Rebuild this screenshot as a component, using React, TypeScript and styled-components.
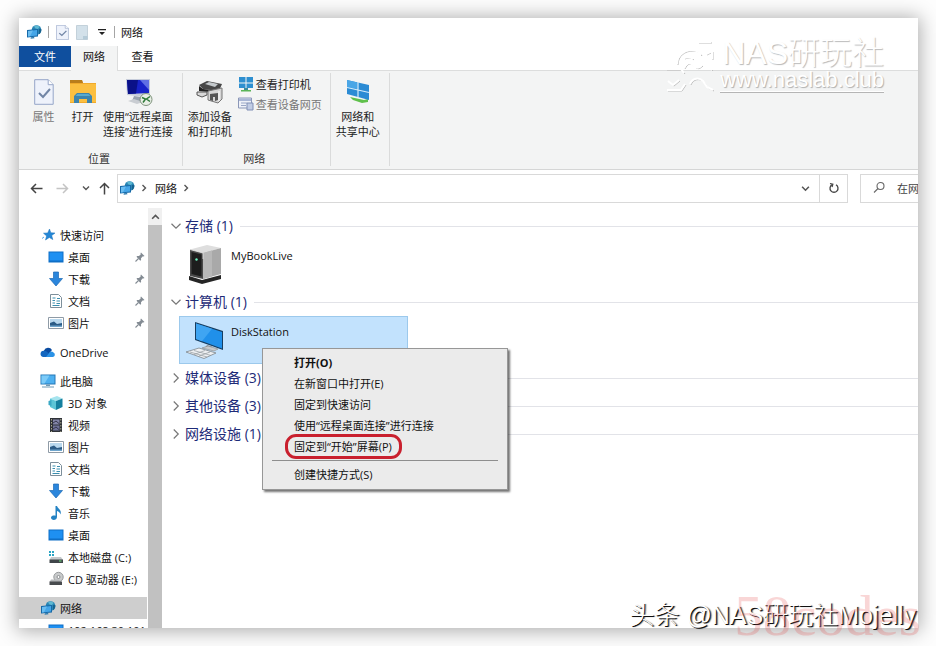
import React from "react";
import styled, { createGlobalStyle, css } from "styled-components";

const fontStack = `"Open Sans", "Noto Sans", "Noto Sans CJK SC", sans-serif`;

const GlobalStyle = createGlobalStyle`
  * { box-sizing: border-box; }
  body { margin: 0; background: #fff; }
  button, input, a { font: inherit; color: inherit; }
  button { border: 0; padding: 0; margin: 0; background: none; }
  ul { list-style: none; margin: 0; padding: 0; }
  svg { display: block; flex: none; }
`;

const Page = styled.main`
  height: 100vh;
  padding: 18px 18px 18px 19px;
  overflow: hidden;
  font: 11px/15px ${fontStack};
  color: #111;
  background: #fdfdfd;
`;

const Window = styled.section`
  position: relative;
  display: flex;
  flex-direction: column;
  height: 100%;
  background: #fff;
  box-shadow: 0 1px 18px 2px rgba(0, 0, 0, 0.32);
`;

const TitleBar = styled.header`
  display: flex;
  align-items: center;
  height: 28px;
  padding-left: 7px;
  gap: 6px;
`;

const Divider = styled.span`
  width: 1px;
  height: 12px;
  background: #a5a5a5;
`;

const IconButton = styled.button`
  display: flex;
  align-items: center;
  justify-content: center;
  min-width: 13px;
`;

const QuickButton = styled(IconButton)`
  min-width: 14px;
`;

const Title = styled.h1`
  margin: 0;
  font-size: 11px;
  font-weight: 400;
`;

const Tabs = styled.nav`
  display: flex;
  height: 25px;
  border-bottom: 1px solid #dcdddd;
`;

const Tab = styled.button<{ $kind: "file" | "active" | "plain" }>`
  width: 49px;
  height: 21px;
  ${(p) =>
    p.$kind === "file" &&
    css`
      width: 52px;
      color: #fff;
      background: #0f4f9e;
    `}
  ${(p) =>
    p.$kind === "active" &&
    css`
      height: 25px;
      width: 47px;
      padding-bottom: 4px;
      background: #f3f4f4;
      border-right: 1px solid #dcdddd;
    `}
`;

const Ribbon = styled.div`
  display: flex;
  height: 99px;
  padding: 2px 0 3px;
  background: #f3f4f4;
  border-bottom: 1px solid #d5d6d6;
`;

const RibbonGroup = styled.section`
  display: flex;
  flex-direction: column;
  justify-content: space-between;
  padding: 4px 8px 0 4px;
  border-right: 1px solid #dadbdb;
  &:first-child { padding-left: 5px; }
`;

const RibbonItems = styled.div`
  display: flex;
  align-items: flex-start;
`;

const GroupLabel = styled.h2`
  height: 15px;
  margin: 0;
  font-size: 11px;
  font-weight: 400;
  text-align: center;
  color: #333;
`;

const LargeButton = styled.button<{ $muted?: boolean }>`
  display: flex;
  flex-direction: column;
  align-items: center;
  min-width: 39px;
  padding: 0 1px;
  gap: 2px;
  white-space: nowrap;
  color: ${(p) => (p.$muted ? "#777" : "#222")};
`;

const SmallColumn = styled.div`
  display: flex;
  flex-direction: column;
  padding-left: 5px;
`;

const SmallButton = styled.button<{ $muted?: boolean }>`
  display: flex;
  align-items: center;
  gap: 2px;
  height: 20px;
  margin-top: -3px;
  margin-bottom: 3px;
  white-space: nowrap;
  color: ${(p) => (p.$muted ? "#777" : "#222")};
`;

const AddressRow = styled.div`
  display: flex;
  align-items: center;
  height: 36px;
  margin-bottom: 2px;
  padding-left: 11px;
`;

const NavButtons = styled.div`
  display: flex;
  align-items: center;
  gap: 13px;
  margin-right: 6px;
`;

const HistoryGroup = styled.div`
  display: flex;
  align-items: center;
  gap: 6px;
  margin-left: -3px;
`;

const AddressField = styled.div`
  display: flex;
  flex: 1;
  align-items: center;
  height: 29px;
  border: 1px solid #d9d9d9;
`;

const Crumbs = styled.div`
  display: flex;
  flex: 1;
  align-items: center;
  gap: 5px;
  padding-left: 1px;
`;

const CrumbLink = styled.a`
  padding-left: 2px;
  text-decoration: none;
`;

const FieldButton = styled.button<{ $edge?: boolean }>`
  display: flex;
  align-items: center;
  justify-content: center;
  width: 28px;
  height: 27px;
  border-left: ${(p) => (p.$edge ? "1px solid #d9d9d9" : "0")};
`;

const SearchField = styled.label`
  display: flex;
  flex: 0 0 58px;
  align-items: center;
  gap: 11px;
  height: 29px;
  margin-left: 12px;
  padding-left: 11px;
  overflow: hidden;
  border: 1px solid #d9d9d9;
  border-right: 0;
`;

const SearchInput = styled.input`
  flex: none;
  width: 100px;
  padding: 0;
  border: 0;
  outline: 0;
  background: transparent;
  &::placeholder { color: #444; opacity: 1; }
`;

const Body = styled.div`
  display: flex;
  flex: 1;
  min-height: 0;
`;

const Sidebar = styled.nav`
  display: flex;
  flex: 0 0 128px;
  flex-direction: column;
  gap: 7px;
  padding-top: 16px;
  overflow: hidden;
`;

const SideRow = styled.a<{ $level: number; $active?: boolean }>`
  display: flex;
  align-items: center;
  gap: 4px;
  height: 22px;
  padding: 0 2px 0 ${(p) => (p.$level ? 29 : 21)}px;
  text-decoration: none;
  white-space: nowrap;
  background: ${(p) => (p.$active ? "#cecece" : "transparent")};
`;

const SideLabel = styled.span`
  flex: 1;
`;

const ScrollTrack = styled.div`
  display: flex;
  flex: 0 0 14px;
  flex-direction: column;
  margin-left: 1px;
  background: #f0f0f0;
`;

const ScrollUp = styled.button`
  display: flex;
  align-items: center;
  justify-content: center;
  height: 17px;
`;

const ScrollThumb = styled.div`
  flex: 1;
  background: #c1c1c1;
`;

const Content = styled.div`
  flex: 1;
  padding: 4px 0 0 8px;
`;

const SectionHeading = styled.button`
  display: flex;
  align-items: center;
  gap: 3px;
  width: 100%;
  height: 28px;
  font-size: 14px;
  line-height: 20px;
  color: #1e2b78;
  white-space: nowrap;
  &::after {
    content: "";
    flex: 1;
    height: 1px;
    margin-left: 4px;
    background: #e2e3e8;
  }
`;

const DeviceTile = styled.div<{ $selected?: boolean }>`
  position: relative;
  display: flex;
  gap: 5px;
  width: 229px;
  height: 48px;
  margin-left: 9px;
  padding: 3px 6px;
  border: 1px solid ${(p) => (p.$selected ? "#9cc9ec" : "transparent")};
  background: ${(p) => (p.$selected ? "#c2e2fd" : "transparent")};
`;

const DeviceName = styled.span`
  padding-top: 4px;
`;

const Menu = styled.div`
  position: absolute;
  z-index: 2;
  top: 31px;
  left: 82px;
  width: 246px;
  padding: 3px 9px 4px;
  background: #ebebeb;
  border: 1px solid #979797;
  box-shadow: 2px 2px 2px rgba(0, 0, 0, 0.55);
`;

const MenuItem = styled.button<{ $strong?: boolean }>`
  position: relative;
  display: block;
  width: 100%;
  height: 21px;
  padding-left: 22px;
  text-align: left;
  white-space: nowrap;
  font-weight: ${(p) => (p.$strong ? 700 : 400)};
`;

const Highlight = styled.span`
  position: absolute;
  top: -2px;
  left: 13px;
  width: 117px;
  height: 25px;
  border: 3px solid #c9202e;
  border-radius: 11px;
`;

const MenuRule = styled.hr`
  height: 1px;
  margin: 3px 0;
  border: 0;
  background: #8e8e8e;
`;

const BrandMark = styled.div`
  position: absolute;
  top: 20px;
  right: 34px;
  display: flex;
  align-items: flex-start;
  color: #fff;
  font-family: "Liberation Sans", "Noto Sans CJK SC", sans-serif;
  text-shadow: 1px 1px 1px rgba(0, 0, 0, 0.28);
`;

const BrandText = styled.div`
  display: flex;
  flex-direction: column;
  align-items: flex-end;
`;

const BrandName = styled.div`
  height: 30px;
  font-size: 32px;
  line-height: 30px;
  font-weight: 300;
`;

const BrandUrl = styled.div`
  height: 24px;
  font-size: 22px;
  line-height: 23px;
  border-bottom: 1px solid #fff;
  box-shadow: 0 1px 0 #b5b5b5;
`;

const AuthorMark = styled.div`
  position: absolute;
  right: 2px;
  bottom: -2px;
  font: 300 25px/30px "Liberation Sans", "Noto Sans CJK SC", sans-serif;
  color: #fff;
  white-space: nowrap;
  text-shadow: 1px 1px 0 #111, 2px 1px 1px rgba(0, 0, 0, 0.5);
`;

const SiteMark = styled.div`
  position: absolute;
  right: -3px;
  bottom: -18px;
  font: 57px/60px "Liberation Serif", serif;
  color: rgba(226, 70, 70, 0.22);
`;

const Chevron = ({ dir, color = "#555", size = 8 }: { dir: "up" | "down" | "right"; color?: string; size?: number }) => {
  const d = { up: "M1 6l3-3 3 3", down: "M1 2.5l3 3 3-3", right: "M2.5 1l3 3-3 3" }[dir];
  return (
    <svg width={size} height={size} viewBox="0 0 8 8" fill="none" stroke={color} strokeWidth={size > 9 ? 0.8 : 1.4}>
      <path d={d} />
    </svg>
  );
};

const NetworkIcon = () => (
  <svg width="16" height="16" viewBox="0 0 16 16">
    <circle cx="10.5" cy="6" r="4.8" fill="#2a86b4" />
    <path d="M8 2.500c2-1.500 4-1.300 5.500.5L12 5 9.500 4.500z" fill="#5fb9d2" />
    <path d="M13 5l2.300 0c.3 2-.3 4-2.300 5.200z" fill="#17638f" />
    <path d="M1 6l11-1v7.500L1 13.500z" fill="#1769a8" />
    <path d="M2 7l9-.9v5.400l-9 .9z" fill="#45a6e8" />
    <path d="M2 7l5-.5-3 5.700-2 .2z" fill="#6bbdf0" />
    <path d="M5 13.300l3-.3.5 1.200-4 .5z" fill="#2a79ac" />
  </svg>
);

const DocCheckIcon = ({ w, h }: { w: number; h: number }) => (
  <svg width={w} height={h} viewBox="0 0 20 26" preserveAspectRatio="none">
    <path d="M.7.7h13.500l5 5v19.600H.7z" fill="#eef2fb" stroke="#95a5c8" />
    <path d="M14.200.7v5h5" fill="#fff" stroke="#95a5c8" />
    <path d="M5 14l4 4 7-8" fill="none" stroke="#7286a6" strokeWidth="2" />
  </svg>
);

const FadedDocIcon = () => (
  <svg width="12" height="15" viewBox="0 0 12 15">
    <path d="M.5.500h11v14H.5z" fill="#d3e1ea" stroke="#c3d1da" />
    <path d="M7 11h4.500v3.500H7z" fill="#b5cbd8" />
  </svg>
);

const CustomizeIcon = () => (
  <svg width="8" height="8" viewBox="0 0 8 8">
    <path d="M0 1h8v1.200H0zM1 4h6L4 7z" fill="#222" />
  </svg>
);

const OpenFolderIcon = () => (
  <svg width="28" height="30" viewBox="0 0 28 30">
    <path d="M1 3h12l1 3h13v20H1z" fill="#f0aa2c" />
    <path d="M1 3h12l1 3H1z" fill="#b97d1b" />
    <path d="M1 7h26v18H1z" fill="#fbbf40" />
    <path d="M5 26v-7l3-3h12l3 3v7h-5v-4h-8v4z" fill="#3d84ad" />
    <path d="M6.500 19l2-2h11l2 2z" fill="#5aaacd" />
  </svg>
);

const RemoteIcon = () => (
  <svg width="30" height="30" viewBox="0 0 30 30">
    <path d="M3 2l24 0v15l-3 3L4 18z" fill="#c6ccda" />
    <path d="M4 3l22 0v13L5 17z" fill="#1823c8" />
    <path d="M4 3l11 0-2 13.500L5 17z" fill="#0a1188" />
    <path d="M17 3l9 0v10z" fill="#5f6fe4" />
    <path d="M11 19l7 1 0 4H9z" fill="#9aa3b0" />
    <path d="M5 24l6-2 9 3-6 2z" fill="#c9cdd2" />
    <circle cx="23" cy="22.500" r="6" fill="#e9efe6" stroke="#7f937d" />
    <path d="M19 20.500l3.500 1.500-2.500 3.500M27 19.500l-3.500 2.500 3.500 2.500" fill="none" stroke="#2f7a39" strokeWidth="1.500" />
  </svg>
);

const PrinterIcon = () => (
  <svg width="28" height="30" viewBox="0 0 28 30">
    <path d="M3 8l8-4 15 3-3 7-16-2z" fill="#474747" />
    <path d="M9 7l4-2 9 2-3 3z" fill="#c4c9cc" />
    <path d="M3 9l4 3 16 2v2L3 14z" fill="#222" />
    <path d="M1 15h10v3l-5 2-5-2z" fill="#d8d8d8" stroke="#555" />
    <path d="M12 14l14-3v11l-4 4-10-3z" fill="#d6d6d6" stroke="#777" />
    <path d="M14 17l8-1v7l-3 1v-4h-2v4l-3-1z" fill="#555" />
    <path d="M23 14v10" stroke="#fff" />
  </svg>
);

const PanesIcon = () => (
  <svg width="16" height="16" viewBox="0 0 16 16">
    <path d="M1 1h6.500v5.500H1zM8.500 1H15v5.500H8.500zM1 7.500h6.500V12H1zM8.500 7.500H15V12H8.500z" fill="#2e8fd0" />
    <path d="M6 12h4v2H6z" fill="#3d8c9a" />
    <path d="M3 14h10v1.500H3z" fill="#59b457" />
  </svg>
);

const WebPageIcon = () => (
  <svg width="16" height="14" viewBox="0 0 16 14">
    <path d="M.5 1h13v10H.5z" fill="#eef1f8" stroke="#8b97b8" />
    <path d="M1 1.500h12V4H1z" fill="#a9b6d5" />
    <path d="M3 6h6M3 8.500h5" stroke="#9aa7c6" />
    <path d="M9 6h6v7H9z" fill="#c1cce4" stroke="#8190b6" />
  </svg>
);

const SharingIcon = () => (
  <svg width="28" height="30" viewBox="0 0 28 30">
    <path d="M6 20l14 3 4-1v3l-6 1-9-3z" fill="#5fc04b" />
    <path d="M3 3l22 5v15L3 17z" fill="#2b8bd4" />
    <path d="M3 3l10.500 2.400v6.600L3 10z" fill="#4aa6e6" />
    <path d="M14 5v15M3 10.500l22 5" stroke="#d4ecfb" strokeWidth="1.200" />
  </svg>
);

const ArrowIcon = ({ dir, color = "#444" }: { dir: "left" | "right" | "up"; color?: string }) => {
  const d = {
    left: "M12.500 6.500H1.500M6 2L1.500 6.500 6 11",
    right: "M.5 6.500h11M7 2l4.500 4.500L7 11",
    up: "M6.500 12.500v-11M2 6l4.500-4.500L11 6",
  }[dir];
  return (
    <svg width="13" height="13" viewBox="0 0 13 13" fill="none" stroke={color} strokeWidth="1.500">
      <path d={d} />
    </svg>
  );
};

const RefreshIcon = () => (
  <svg width="12" height="12" viewBox="0 0 12 12" fill="none" stroke="#444" strokeWidth="1.300">
    <path d="M8 2.800A4 4 0 1 1 4 2.800" />
    <path d="M2 1.500l2.800.8L4 5" />
  </svg>
);

const SearchIcon = () => (
  <svg width="14" height="14" viewBox="0 0 14 14" fill="none" stroke="#666" strokeWidth="1.100">
    <circle cx="8.500" cy="5" r="3.500" />
    <path d="M6 7.500L2 11.500" />
  </svg>
);

const PinIcon = () => (
  <svg width="10" height="10" viewBox="0 0 10 10">
    <path d="M6 .5L9.500 4l-1 .5-.6-.2L6 6.200l.1 1.800-.8.700L1.500 4.700l.7-.7 1.800.1L5.800 2.200 5.500 1.200z" fill="#838b93" />
    <path d="M3.500 6.500L.5 9.500" stroke="#838b93" strokeWidth="1.100" />
  </svg>
);

const StarIcon = () => (
  <svg width="16" height="16" viewBox="0 0 16 16">
    <path d="M9.500 2l1.300 3.800 4.200.2-3.300 2.600 1.100 4L9.300 10.500 5.500 13l1.100-4.100L3.500 6.200l4.200-.3z" fill="#2487d6" stroke="#1870b8" strokeWidth=".5" />
    <path d="M4 10L2 11.500" stroke="#5aa9e4" />
  </svg>
);

const DesktopIcon = () => (
  <svg width="16" height="16" viewBox="0 0 16 16">
    <path d="M.5 2.500h15v11H.5z" fill="#0f6fc6" />
    <path d="M1.500 3.500h13v8h-13z" fill="#1e90f2" />
  </svg>
);

const DownloadIcon = () => (
  <svg width="16" height="16" viewBox="0 0 16 16">
    <path d="M5.500 1h5v6.500h4L8 15 1.500 7.500h4z" fill="#2b86dc" stroke="#1a68b5" strokeWidth=".7" />
  </svg>
);

const DocumentIcon = () => (
  <svg width="16" height="16" viewBox="0 0 16 16">
    <path d="M2.500 1.500h8l3 3v10h-11z" fill="#fff" stroke="#7d8f9b" />
    <path d="M4.500 5h3M9 5.500h3M4.500 7.500H7M8.500 8H12M4.500 10H7M8.500 10.500H12M4.500 12.500h7" stroke="#3b8fb0" strokeWidth="1.200" />
  </svg>
);

const PictureIcon = () => (
  <svg width="16" height="16" viewBox="0 0 16 16">
    <path d="M.5 2.500h15v11H.5z" fill="#fff" stroke="#8f9ba6" />
    <path d="M2 4h12v8H2z" fill="#b9d8ee" />
    <path d="M2 8l4-1.500L9 9l5-1v4H2z" fill="#2b5b86" />
    <path d="M2 10.500h12V12H2z" fill="#6fa5cc" />
  </svg>
);

const CloudIcon = () => (
  <svg width="16" height="16" viewBox="0 0 16 16">
    <path d="M4 6.500A4.500 4.500 0 0 1 12 6l-5 6H3z" fill="#0a4ba0" />
    <path d="M3.500 13a3 3 0 0 1 .3-6.200C6 6.500 7 8 9 9.500L12.500 13z" fill="#1366bf" />
    <path d="M6 13l4-5a3 3 0 0 1 3.500.5A2.400 2.400 0 0 1 13 13z" fill="#2a92e6" />
  </svg>
);

const ComputerIcon = () => (
  <svg width="16" height="16" viewBox="0 0 16 16">
    <path d="M.5 1.500h15v10H.5z" fill="#2577b5" />
    <path d="M1.500 2.500h13v8h-13z" fill="#4eb0f0" />
    <path d="M1.500 2.500h8l-5 8h-3z" fill="#7ccbf8" />
    <path d="M6 11.500h4v1.500H6zM2 13.500h12v1H2z" fill="#6f9ab5" />
  </svg>
);

const CubeIcon = () => (
  <svg width="16" height="16" viewBox="0 0 16 16">
    <path d="M2 3.500L9 1l5.500 2.500L8 6z" fill="#a6e4ee" />
    <path d="M2 3.500L8 6v9l-6-3z" fill="#5cc5d6" />
    <path d="M8 6l6.500-2.500V12L8 15z" fill="#15809f" />
    <path d="M.5 6l3-1v6l-3-1z" fill="#3aa9c5" />
  </svg>
);

const VideoIcon = () => (
  <svg width="16" height="16" viewBox="0 0 16 16">
    <path d="M2 1h12v14H2z" fill="#2f3238" />
    <path d="M5 2.500h6.500v5H5z" fill="#8385a8" />
    <path d="M5 8.500h6.500v5H5z" fill="#6f7299" />
    <path d="M3.500 2v13M12.800 2v13" stroke="#a9a88c" strokeWidth="1" strokeDasharray="1.500 1.500" />
    <path d="M5 6l3-2 3.500 3M5 12l3-2 3.500 3" stroke="#34364c" fill="none" />
  </svg>
);

const MusicIcon = () => (
  <svg width="16" height="16" viewBox="0 0 16 16">
    <path d="M7.500 1H9c.5 2.500 5 3.500 3.500 8.500-.5-2-1.700-3-3.500-3.500V12c0 4-6.500 3.500-6 .5.400-2 3-2.400 4.500-1.700z" fill="#2583c4" />
  </svg>
);

const DiskIcon = () => (
  <svg width="16" height="16" viewBox="0 0 16 16">
    <path d="M1 2h2v2H1zM4 2h2v2H4zM1 5h2v2H1zM4 5h2v2H4z" fill="#29a5c4" />
    <path d="M3 8h10l2 3H1.500z" fill="#c3c7ca" />
    <path d="M1.500 10.500H15V14H1.500z" fill="#3f4549" />
    <path d="M11 12h2.500" stroke="#6de07d" />
  </svg>
);

const CdIcon = () => (
  <svg width="16" height="16" viewBox="0 0 16 16">
    <circle cx="10.500" cy="6" r="4.700" fill="#c9cbcc" stroke="#989b9d" />
    <circle cx="10.500" cy="6" r="1.500" fill="#fff" stroke="#8b8e90" />
    <path d="M3 8.500h8l2 2.500H1.500z" fill="#b5b8ba" />
    <path d="M1.500 10.500h12.500V14H1.500z" fill="#484b4e" />
  </svg>
);

const NasIcon = () => (
  <svg width="40" height="40" viewBox="0 0 40 40">
    <path d="M3 32l13 4 19-5v4l-19 5-13-4z" fill="#252525" />
    <path d="M4 5.500L21 1l14 3-18 5z" fill="#dedede" />
    <path d="M4 5.500L17 9v26L4 32z" fill="#4a4a4a" />
    <path d="M5.500 8L15.500 10.500v22L5.500 30z" fill="#1d1d1d" />
    <path d="M17 9l18-5v26l-18 5z" fill="#a9a9a9" />
    <path d="M17 9l9-2.500v26L17 35z" fill="#b8b8b8" />
    <circle cx="10.500" cy="15.500" r="1.200" fill="#6df0bd" />
    <path d="M4 5.500L17 9v6" fill="none" stroke="#e6e6e6" strokeWidth=".8" />
  </svg>
);

const WorkstationIcon = () => (
  <svg width="40" height="40" viewBox="0 0 40 40">
    <path d="M9 2l28 9v19L9 20z" fill="#173e61" />
    <path d="M10 3.500L36 12v16.500L10 19z" fill="#2090ea" />
    <path d="M10 3.500L26 8.700 16 21.200 10 19z" fill="#3fa5f2" />
    <path d="M21 25l5 1.500-1 3-6-2z" fill="#8c9499" />
    <path d="M16 28l12 3 4-2-10-3z" fill="#c7cbce" stroke="#888" strokeWidth=".6" />
    <path d="M0 32l13-4 17 5-12 5.500z" fill="#eef0f2" stroke="#7f868b" strokeWidth=".8" />
    <path d="M4 32l17 5M8 30.500l17 5M8 34.500l11-4M13 36l11-4" stroke="#92999e" strokeWidth=".7" />
  </svg>
);

const gearPaths = [
  "M13 26c0-9 7-14 15-14 5 0 7 2 9 5",
  "M20 20c4-2 7-1 9 1",
  "M20 30c3-6 6-6 9-3s5 4 9 0",
  "M34 4h13M42 16l6-3v8M42 26l6 6",
  "M2 31h15l3 4M4 43l5 4 6-5M3 52h14l4-6",
  "M26 46c2-6 9-7 13-3l4 6 6 3",
];

const GearMark = () => (
  <svg width="56" height="54" viewBox="0 0 56 54" fill="none">
    {gearPaths.map((d) => (
      <g key={d}>
        <path d={d} stroke="#bdbdbd" transform="translate(1 1)" />
        <path d={d} stroke="#fff" strokeWidth="2" />
      </g>
    ))}
  </svg>
);

type SideEntry = { label: string; icon: React.ReactNode; level?: number; pinned?: boolean; active?: boolean };

const sideGroups: SideEntry[][] = [
  [
    { label: "快速访问", icon: <StarIcon /> },
    { label: "桌面", icon: <DesktopIcon />, level: 1, pinned: true },
    { label: "下载", icon: <DownloadIcon />, level: 1, pinned: true },
    { label: "文档", icon: <DocumentIcon />, level: 1, pinned: true },
    { label: "图片", icon: <PictureIcon />, level: 1, pinned: true },
  ],
  [{ label: "OneDrive", icon: <CloudIcon /> }],
  [
    { label: "此电脑", icon: <ComputerIcon /> },
    { label: "3D 对象", icon: <CubeIcon />, level: 1 },
    { label: "视频", icon: <VideoIcon />, level: 1 },
    { label: "图片", icon: <PictureIcon />, level: 1 },
    { label: "文档", icon: <DocumentIcon />, level: 1 },
    { label: "下载", icon: <DownloadIcon />, level: 1 },
    { label: "音乐", icon: <MusicIcon />, level: 1 },
    { label: "桌面", icon: <DesktopIcon />, level: 1 },
    { label: "本地磁盘 (C:)", icon: <DiskIcon />, level: 1 },
    { label: "CD 驱动器 (E:)", icon: <CdIcon />, level: 1 },
  ],
  [
    { label: "网络", icon: <NetworkIcon />, active: true },
    { label: "192.168.30.101", icon: <DesktopIcon />, level: 1 },
  ],
];

const Heading = ({ label, open }: { label: string; open?: boolean }) => (
  <SectionHeading aria-expanded={!!open}>
    <Chevron dir={open ? "down" : "right"} color="#777" size={12} />
    {label}
  </SectionHeading>
);

export default function App() {
  return (
    <Page>
      <GlobalStyle />
      <Window>
        <TitleBar>
          <NetworkIcon />
          <Divider />
          <QuickButton aria-label="属性"><DocCheckIcon w={13} h={15} /></QuickButton>
          <QuickButton aria-label="新建"><FadedDocIcon /></QuickButton>
          <IconButton aria-label="自定义"><CustomizeIcon /></IconButton>
          <Divider />
          <Title>网络</Title>
        </TitleBar>
        <Tabs>
          <Tab $kind="file">文件</Tab>
          <Tab $kind="active">网络</Tab>
          <Tab $kind="plain">查看</Tab>
        </Tabs>
        <Ribbon>
          <RibbonGroup>
            <RibbonItems>
              <LargeButton $muted><svg width="20" height="30" viewBox="0 0 20 30"><g transform="translate(0 2)"><DocCheckIcon w={20} h={26} /></g></svg>属性</LargeButton>
              <LargeButton><OpenFolderIcon />打开</LargeButton>
              <LargeButton><RemoteIcon /><span>使用“远程桌面<br />连接”进行连接</span></LargeButton>
            </RibbonItems>
            <GroupLabel>位置</GroupLabel>
          </RibbonGroup>
          <RibbonGroup>
            <RibbonItems>
              <LargeButton><PrinterIcon /><span>添加设备<br />和打印机</span></LargeButton>
              <SmallColumn>
                <SmallButton><PanesIcon />查看打印机</SmallButton>
                <SmallButton $muted><WebPageIcon />查看设备网页</SmallButton>
              </SmallColumn>
            </RibbonItems>
            <GroupLabel>网络</GroupLabel>
          </RibbonGroup>
          <RibbonGroup>
            <RibbonItems>
              <LargeButton><SharingIcon /><span>网络和<br />共享中心</span></LargeButton>
            </RibbonItems>
          </RibbonGroup>
        </Ribbon>
        <AddressRow>
          <NavButtons>
            <IconButton aria-label="后退"><ArrowIcon dir="left" /></IconButton>
            <IconButton aria-label="前进"><ArrowIcon dir="right" color="#c4c4c4" /></IconButton>
            <HistoryGroup>
              <IconButton aria-label="最近"><Chevron dir="down" /></IconButton>
              <IconButton aria-label="上移"><ArrowIcon dir="up" /></IconButton>
            </HistoryGroup>
          </NavButtons>
          <AddressField>
            <Crumbs>
              <NetworkIcon />
              <Chevron dir="right" />
              <CrumbLink href="#network">网络</CrumbLink>
              <Chevron dir="right" />
            </Crumbs>
            <FieldButton aria-label="展开"><Chevron dir="down" size={9} /></FieldButton>
            <FieldButton $edge aria-label="刷新"><RefreshIcon /></FieldButton>
          </AddressField>
          <SearchField>
            <SearchIcon />
            <SearchInput aria-label="搜索" placeholder="在网络中搜索" />
          </SearchField>
        </AddressRow>
        <Body>
          <Sidebar>
            {sideGroups.map((group, g) => (
              <ul key={g}>
                {group.map((item) => (
                  <li key={item.label}>
                    <SideRow href="#" $level={item.level ?? 0} $active={item.active}>
                      {item.icon}
                      <SideLabel>{item.label}</SideLabel>
                      {item.pinned && <PinIcon />}
                    </SideRow>
                  </li>
                ))}
              </ul>
            ))}
          </Sidebar>
          <ScrollTrack>
            <ScrollUp aria-label="向上滚动"><Chevron dir="up" size={9} /></ScrollUp>
            <ScrollThumb />
          </ScrollTrack>
          <Content>
            <Heading open label="存储 (1)" />
            <DeviceTile>
              <NasIcon />
              <DeviceName>MyBookLive</DeviceName>
            </DeviceTile>
            <Heading open label="计算机 (1)" />
            <DeviceTile $selected>
              <WorkstationIcon />
              <DeviceName>DiskStation</DeviceName>
              <Menu>
                <MenuItem $strong>打开(O)</MenuItem>
                <MenuItem>在新窗口中打开(E)</MenuItem>
                <MenuItem>固定到快速访问</MenuItem>
                <MenuItem>使用“远程桌面连接”进行连接</MenuItem>
                <MenuItem>固定到“开始”屏幕(P)<Highlight /></MenuItem>
                <MenuRule />
                <MenuItem>创建快捷方式(S)</MenuItem>
              </Menu>
            </DeviceTile>
            <Heading label="媒体设备 (3)" />
            <Heading label="其他设备 (3)" />
            <Heading label="网络设施 (1)" />
          </Content>
        </Body>
        <BrandMark>
          <GearMark />
          <BrandText>
            <BrandName>NAS研玩社</BrandName>
            <BrandUrl>www.naslab.club</BrandUrl>
          </BrandText>
        </BrandMark>
        <AuthorMark>头条 @NAS研玩社Mojelly</AuthorMark>
        <SiteMark>58codes</SiteMark>
      </Window>
    </Page>
  );
}
